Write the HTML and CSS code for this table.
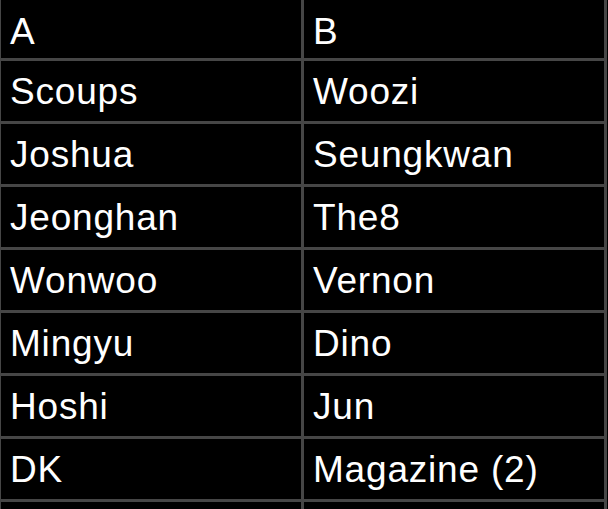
FILE: index.html
```html
<!DOCTYPE html>
<html>
<head>
<meta charset="utf-8">
<link rel="stylesheet" href="styles.css">
</head>
<body>
<table class="grid">
  <thead>
    <tr class="head-row"><th class="cell">A</th><th class="cell">B</th></tr>
  </thead>
  <tbody>
    <tr class="row"><td class="cell">Scoups</td><td class="cell">Woozi</td></tr>
    <tr class="row"><td class="cell">Joshua</td><td class="cell">Seungkwan</td></tr>
    <tr class="row"><td class="cell">Jeonghan</td><td class="cell">The8</td></tr>
    <tr class="row"><td class="cell">Wonwoo</td><td class="cell">Vernon</td></tr>
    <tr class="row"><td class="cell">Mingyu</td><td class="cell">Dino</td></tr>
    <tr class="row"><td class="cell">Hoshi</td><td class="cell">Jun</td></tr>
    <tr class="row"><td class="cell">DK</td><td class="cell">Magazine (2)</td></tr>
    <tr class="row"><td class="cell">&nbsp;</td><td class="cell">&nbsp;</td></tr>
  </tbody>
</table>
</body>
</html>
```
FILE: styles.css
```css
html, body {
  margin: 0;
  padding: 0;
  background: #000;
  overflow: hidden;
}
.grid {
  border-collapse: separate;
  border-spacing: 0;
  margin-left: -2px;
  font-family: "Liberation Sans", Arial, sans-serif;
  font-size: 37px;
  letter-spacing: 0.8px;
  color: #fff;
}
.cell {
  box-sizing: border-box;
  width: 303px;
  padding: 0 0 0 9px;
  text-align: left;
  font-weight: normal;
  vertical-align: middle;
  line-height: 41px;
  border-right: 3px solid #464646;
  border-bottom: 3px solid #464646;
}
.cell:first-child {
  width: 306px;
  border-left: 3px solid #464646;
}
.head-row .cell {
  height: 61px;
  padding-top: 4px;
}
.row .cell {
  height: 63px;
}
```
